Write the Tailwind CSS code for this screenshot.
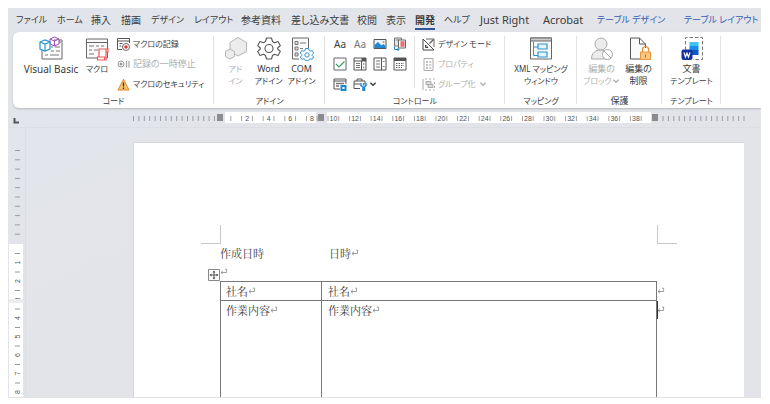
<!DOCTYPE html>
<html lang="ja">
<head>
<meta charset="utf-8">
<title>Word</title>
<script src="https://cdn.jsdelivr.net/npm/@tailwindcss/browser@4"></script>
</head>
<body class="h-screen bg-white pt-2 pr-[9px] pb-[6px] pl-2 font-['Noto_Sans','Noto_Sans_CJK_JP',sans-serif] text-[9px] text-[#3c3c3c] [font-feature-settings:'palt']">
<svg class="hidden">
  <symbol id="ret" viewBox="0 0 8 8"><path d="M5 1.2h1.6v3.3H1M3 2.6 1 4.5l2 1.8" fill="none" stroke="#888" stroke-width=".8"/></symbol>
  <symbol id="chev" viewBox="0 0 6 6"><path d="M1 2l2 2 2-2" fill="none" stroke="currentColor"/></symbol>
</svg>
<div class="flex h-full flex-col overflow-hidden border-b border-[#e2e2e4] bg-linear-to-br from-[#e1e5ea] via-[#e3e4ea] to-[#e2e4ea]">
  <nav class="grid h-6 shrink-0 grid-cols-[41px_34px_30px_30px_43px_47px_50px_66px_29px_29px_29px_36px_63px_54px_87px_1fr] items-center pl-2 text-[10px] whitespace-nowrap">
    <a href="#" class="text-[9px]">ファイル</a><a href="#" class="text-[9px]">ホーム</a><a href="#">挿入</a><a href="#">描画</a><a href="#" class="text-[9px]">デザイン</a><a href="#" class="text-[9px]">レイアウト</a><a href="#">参考資料</a><a href="#">差し込み文書</a><a href="#">校閲</a><a href="#">表示</a><a href="#" class="h-5 w-5 border-b-2 border-[#2b579a] leading-5 font-bold">開発</a><a href="#" class="text-[9px]">ヘルプ</a><a href="#" class="text-[11px]">Just Right</a><a href="#" class="text-[11px]">Acrobat</a><a href="#" class="text-[9px] text-[#2f5fb3]">テーブル デザイン</a><a href="#" class="text-[9px] text-[#2f5fb3]">テーブル レイアウト</a>
  </nav>

  <div class="ml-[5px] grid h-[76px] shrink-0 grid-cols-[201px_111px_180px_72px_85px_59px_1fr] rounded-l-md bg-white pt-0.5 whitespace-nowrap shadow-[0_1px_2px_#b5b7bd]">
    <section class="relative flex flex-col after:absolute after:top-0.5 after:right-0 after:h-[68px] after:w-px after:bg-[#e1e1e1]">
      <div class="flex h-[60px] pl-2">
        <button class="flex w-[60px] flex-col items-center gap-0.5 pt-0.5 leading-3">
          <svg class="h-[25px] w-[26px]" viewBox="0 0 26 25" fill="none"><path d="M4 14v9h20V4H16" stroke="#666"/><path d="M16 4h8v3h-8z" fill="#aaa"/><path d="M13 11h2m2 0h5M13 15h3m2 0h4M7 19h3m2 0h9" stroke="#777"/><path d="M12 3l4.500-2L21 3v5l-4.500 2L12 8zM12 3l4.500 2L21 3M16.500 5v5" stroke="#a24bb8" fill="#fff"/><path d="M2 6l5-2 5 2v7l-5 2-5-2zM2 6l5 2 5-2M7 8v7" stroke="#2e93d0" fill="#fff" stroke-width="1.200"/></svg>
          <span class="text-[10px]">Visual Basic</span>
        </button>
        <button class="flex w-8 flex-col items-center gap-0.5 pt-0.5 leading-3">
          <svg class="h-[25px] w-6" viewBox="0 0 24 25" fill="none"><path d="M1.500 3h21v19h-21z" stroke="#666" fill="#fafafa"/><path d="M1.500 6.500h21" stroke="#666"/><path d="M4 10h5m2 0h3m2 0h3M4 14h3m2 0h4M4 18h5" stroke="#777"/><path d="M14 13h9v3h-2v8h-8.500v-3H14zM21 16v-3M12.500 21h7v3" stroke="#ee5a5a" fill="#fff" stroke-width="1.200"/></svg>
          <span class="text-[8px]">マクロ</span>
        </button>
        <div class="pl-1">
          <button class="flex h-5 items-center gap-[3px] text-[8px]"><svg class="size-[13px]" viewBox="0 0 13 13" fill="none"><path d="M5 11.500H.5V.5h12V5M.5 3h12M2.500 5.500h3M2.500 8h2" stroke="#555"/><circle cx="9" cy="9" r="3.500" stroke="#666" fill="#fff"/><circle cx="9" cy="9" r="1.800" fill="#e03c31"/></svg>マクロの記録</button>
          <button class="flex h-5 items-center gap-[3px] text-[#b0b0b0]" disabled><svg class="size-[13px]" viewBox="0 0 13 13" fill="none"><circle cx="4" cy="6" r="3" stroke="#999"/><circle cx="4" cy="6" r="1.500" fill="#999"/><path d="M9.500 3v6.500M12 3v6.500" stroke="#aaa" stroke-width="1.300"/></svg>記録の一時停止</button>
          <button class="flex h-5 items-center gap-[3px] text-[8px]"><svg class="size-[13px]" viewBox="0 0 13 13"><path d="M6.500 1.200 12 12H1z" fill="#fbc36b" stroke="#e3862e" stroke-linejoin="round"/><path d="M6.500 4.500v4M6.500 9.500V11" stroke="#333" stroke-width="1.300"/></svg>マクロのセキュリティ</button>
        </div>
      </div>
      <h2 class="text-center text-[8px] leading-[14px]">コード</h2>
    </section>

    <section class="relative flex flex-col after:absolute after:top-0.5 after:right-0 after:h-[68px] after:w-px after:bg-[#e1e1e1]">
      <div class="flex h-[60px] pl-[5px]">
        <button class="flex w-[33px] flex-col items-center gap-0.5 pt-0.5 text-[8px] leading-3 text-[#b0b0b0]" disabled>
          <svg class="h-[25px] w-6" viewBox="0 0 24 25" fill="#ececec" stroke="#b5b5b5"><path d="M14 1.500l8.500 5v9L14 20l-8-4.500v-9z"/><path d="M6 13l4.500 2.500v5L6 23l-4.500-2.500v-5z"/></svg>
          <span>アド<br>イン</span>
        </button>
        <button class="flex w-[33px] flex-col items-center gap-0.5 pt-0.5 text-[8px] leading-3">
          <svg class="h-[25px] w-6" viewBox="0 0 24 25" fill="none" stroke="#555" stroke-width="1.100" stroke-linejoin="round"><path d="M9.500 2h5l1 3.500 2 1.200L21 5.600l2.300 4L20.700 12v1l2.600 2.400-2.300 4-3.500-1.100-2 1.200-1 3.500h-5l-1-3.500-2-1.200L3 19.400l-2.300-4L3.300 13v-1L.7 9.600l2.300-4 3.500 1.100 2-1.200z"/><circle cx="12" cy="12.500" r="4"/></svg>
          <span class="flex flex-col items-center"><span class="text-[9px]">Word</span>アドイン</span>
        </button>
        <button class="flex w-[33px] flex-col items-center gap-0.5 pt-0.5 text-[8px] leading-3">
          <svg class="h-[25px] w-6" viewBox="0 0 24 25" fill="none"><path d="M9 23H2.500V2h16v10" stroke="#666" fill="#fafafa"/><path d="M5 5.500h3v3H5zM5 11h3v3H5zM5 17h3v3H5z" stroke="#777" fill="#ddd"/><path d="M10 7h6M10 12.500h3" stroke="#777"/><g stroke="#2e93d0" fill="#fff" stroke-linejoin="round"><path d="M15.500 12.500h3l.5 2 1.200.7 2-.7 1.500 2.500-1.500 1.500v1l1.500 1.500-1.500 2.300-2-.5-1.200.7-.5 1.300h-3l-.5-1.300-1.200-.7-2 .5L10.300 21l1.500-1.500v-1L10.300 17l1.500-2.500 2 .7 1.200-.7z"/><circle cx="17" cy="19" r="2.200"/></g></svg>
          <span class="flex flex-col items-center"><span class="text-[9px]">COM</span>アドイン</span>
        </button>
      </div>
      <h2 class="text-center text-[8px] leading-[14px]">アドイン</h2>
    </section>

    <section class="relative flex flex-col after:absolute after:top-0.5 after:right-0 after:h-[68px] after:w-px after:bg-[#e1e1e1]">
      <div class="flex h-[60px] pl-[5px]">
        <div class="grid w-20 grid-cols-4 grid-rows-3 place-items-center text-[10px]">
          <button>Aa</button>
          <button class="text-[#777]">Aa</button>
          <button aria-label="画像"><svg class="size-[14px]" viewBox="0 0 14 14"><path d="M1 2.500h12v9H1z" fill="#eaf4fb" stroke="#555"/><path d="M1.500 8 5 5l3.500 3.500L10.500 7 12.500 9v2h-11z" fill="#1f86cf"/><circle cx="10.500" cy="5" r="1" fill="#e89a3c"/></svg></button>
          <button aria-label="文書パーツ"><svg class="size-[14px]" viewBox="0 0 14 14" fill="none"><path d="M1.500 1h7v8h-7zM3 3h3" stroke="#777" fill="#e4e4e4"/><path d="M5.500 3h7v8h-7z" fill="#fff" stroke="#666"/><path d="M7.500 4.500h4v5h-4z" fill="#f19a9a"/><path d="M7.500 5h4M7.500 7h4M7.500 9h4" stroke="#e24848"/><path d="M1.500 9.500v3H6M4.500 11 6 12.500 4.500 14" stroke="#1f86cf"/></svg></button>
          <button aria-label="チェック ボックス"><svg class="size-[14px]" viewBox="0 0 14 14" fill="none"><path d="M1 1h12v12H1z" stroke="#666"/><path d="M3 7l3 3 5.500-5.500" stroke="#37a660" stroke-width="1.200"/></svg></button>
          <button aria-label="コンボ ボックス"><svg class="size-[14px]" viewBox="0 0 14 14" fill="none"><path d="M1 1h12v12H1zM1 4h12M8.500 4v9" stroke="#555"/><path d="M8.500 1h4.500v3H8.500z" fill="#555"/><path d="M3 6.500h4M3 8.500h4M3 10.500h4M10.700 6v2M10.700 9.500v2" stroke="#777"/></svg></button>
          <button aria-label="ドロップダウン"><svg class="size-[14px]" viewBox="0 0 14 14" fill="none"><path d="M1 1h12v12H1zM8.500 1v12" stroke="#555"/><path d="M3 4h4M3 7h4M3 10h4M10 5l.8-1 .7 1M10 9l.8 1 .7-1" stroke="#777"/></svg></button>
          <button aria-label="日付の選択"><svg class="size-[14px]" viewBox="0 0 14 14" fill="none"><path d="M1 1h12v12H1z" stroke="#555"/><path d="M1 2.500h12" stroke="#555" stroke-width="3"/><path d="M3 6.500h8M3 8.500h8M3 10.500h6" stroke="#666" stroke-dasharray="1.500 1"/></svg></button>
          <button aria-label="繰り返しセクション"><svg class="size-[14px]" viewBox="0 0 14 14" fill="none"><path d="M7 12H1V2h12v5M1 4h12" stroke="#555"/><path d="M3 6.500h8M3 9h3" stroke="#777" stroke-width="1.500"/><path d="M7.500 8H13.500V14H7.500z" fill="#1f86cf"/><path d="M9.500 10h2v2h-2z" fill="#fff"/></svg></button>
          <button aria-label="以前のツール" class="flex items-center pl-2.5"><svg class="size-[14px]" viewBox="0 0 14 14" fill="none"><path d="M7 11.500H1V4h11v3M4 4V2h5v2M1 7h6" stroke="#555"/><path d="M8 6v2.500L10 10v4h1.500v-4L13 8.500V6M10.700 6v2.500" stroke="#1f86cf" stroke-width="1.500"/></svg><svg class="ml-0.5 size-2"><use href="#chev"/></svg></button>
        </div>
        <div class="mt-0.5 ml-1 h-[52px] w-2 border-l border-[#e1e1e1]"></div>
        <div>
          <button class="flex h-5 items-center gap-[3px] text-[8px]"><svg class="size-[13px]" viewBox="0 0 13 13" fill="none"><path d="M1 1v11h11zM3.500 7v2.500H6z" stroke="#444"/><path d="M4 1h8v8" stroke="#666"/><path d="M11.500 1.500l-4 4" stroke="#666" stroke-width="1.500"/></svg>デザイン モード</button>
          <button class="flex h-5 items-center gap-[3px] text-[8px] text-[#b0b0b0]" disabled><svg class="size-[13px]" viewBox="0 0 13 13" fill="none" stroke="#aaa"><path d="M2 .5h9v12H2z"/><path d="M4 4h2M4 7h2M4 10h2" stroke-width="1.500"/><path d="M7 4h2.500M7 7h2.500M7 10h2.500"/></svg>プロパティ</button>
          <button class="flex h-5 items-center gap-[3px] text-[8px] text-[#b0b0b0]" disabled><svg class="size-[13px]" viewBox="0 0 13 13" fill="none" stroke="#aaa"><path d="M1 1v11M3 1h2M7 1h2M11 1h1.500M12.500 4v2M12.500 8v2M3 12h2M7 12h2M11 12h1.500"/><path d="M4 3.500h5v3H4zM6 6.500h5v3H6z" fill="#ddd"/></svg>グループ化<svg class="size-2"><use href="#chev"/></svg></button>
        </div>
      </div>
      <h2 class="text-center text-[8px] leading-[14px]">コントロール</h2>
    </section>

    <section class="relative flex flex-col after:absolute after:top-0.5 after:right-0 after:h-[68px] after:w-px after:bg-[#e1e1e1]">
      <button class="flex h-[60px] flex-col items-center gap-0.5 pt-0.5 text-[8px] leading-3">
        <svg class="h-[25px] w-6" viewBox="0 0 24 25" fill="none"><path d="M1.500 2h21v21h-21z" fill="#fafafa" stroke="#666"/><path d="M1.500 2h21v3h-21z" fill="#ccc" stroke="#666"/><path d="M4.500 6v13.500H9M4.500 11H9" stroke="#2e93d0"/><path d="M9 8h9v5H9zM9 16h9v5H9z" stroke="#2e93d0" fill="#e8f4fb" stroke-width="1.200"/></svg>
        <span>XML マッピング<br>ウィンドウ</span>
      </button>
      <h2 class="text-center text-[8px] leading-[14px]">マッピング</h2>
    </section>

    <section class="relative flex flex-col after:absolute after:top-0.5 after:right-0 after:h-[68px] after:w-px after:bg-[#e1e1e1]">
      <div class="flex h-[60px] pl-1.5">
        <button class="flex w-[37px] flex-col items-center gap-0.5 pt-0.5 leading-3 text-[#b0b0b0]" disabled>
          <svg class="h-[25px] w-6" viewBox="0 0 24 25" fill="#ececec" stroke="#aaa"><path d="M1.500 23c0-6 4-9 9-9s9 3 9 9z"/><circle cx="11" cy="8" r="6"/><circle cx="17.500" cy="18.500" r="5" fill="#fff"/><path d="M14 15l7 7"/></svg>
          <span class="flex flex-col items-center">編集の<span class="flex items-center text-[8px]">ブロック<svg class="size-2"><use href="#chev"/></svg></span></span>
        </button>
        <button class="flex w-[37px] flex-col items-center gap-0.5 pt-0.5 leading-3">
          <svg class="h-[25px] w-6" viewBox="0 0 24 25" fill="none"><path d="M13 23H3.500V2h9l6 6v4M12.500 2v6h6" stroke="#555" fill="#fafafa"/><path d="M15.500 16v-2.500a3 3 0 0 1 6 0V16" stroke="#e38c2e" stroke-width="1.200"/><path d="M13.500 16h10v7.500h-10z" fill="#fbc680" stroke="#e8973c"/><path d="M18.500 18.500v3" stroke="#b06a1c"/></svg>
          <span>編集の<br>制限</span>
        </button>
      </div>
      <h2 class="text-center leading-[14px]">保護</h2>
    </section>

    <section class="relative flex flex-col after:absolute after:top-0.5 after:right-0 after:h-[68px] after:w-px after:bg-[#e1e1e1]">
      <button class="flex h-[60px] flex-col items-center gap-0.5 pt-0.5 leading-3">
        <svg class="h-[25px] w-6" viewBox="0 0 24 25" fill="none"><path d="M5.500 14V1.500h17v22H13" stroke="#777" stroke-dasharray="3.500 2"/><path d="M9.500 6h9v4h-9z" fill="#3fc1f5"/><path d="M9.500 10h9v4.500h-9z" fill="#1b8be8"/><path d="M9.500 14h9v5h-9z" fill="#1657c8"/><rect x="1.500" y="13.500" width="11" height="10.500" rx="2" fill="#12349c"/><path d="M4 16.500l1.500 4.500L7 17.200 8.500 21 10 16.500" stroke="#fff" stroke-width="1.200"/></svg>
        <span class="flex flex-col items-center">文書<span class="text-[8px]">テンプレート</span></span>
      </button>
      <h2 class="text-center text-[8px] leading-[14px]">テンプレート</h2>
    </section>
  </div>

  <div class="h-5 shrink-0 border-b border-[#dcdee3]">
    <svg id="hruler" class="h-5 w-[753px] font-['Liberation_Sans',sans-serif]" viewBox="0 0 753 20"></svg>
  </div>

  <main class="flex min-h-0 flex-1">
    <div class="w-[18px] shrink-0 border-r border-[#dcdee3]"><svg id="vruler" class="h-[269px] w-[17px] font-['Liberation_Sans',sans-serif]" viewBox="0 0 17 269"></svg></div>
    <article class="mt-[14px] mr-[17px] ml-[107px] flex min-w-0 flex-1 flex-col border-t border-l border-[#d5d7db] bg-white pr-[67px] pl-[67px] font-['Noto_Serif_CJK_JP','Noto_Sans_CJK_JP',serif] text-[11px] [font-feature-settings:normal]">
      <div class="mt-[82px] flex h-[19px] shrink-0 justify-between">
        <span class="w-5 border-r border-b border-[#c9c9c9]"></span>
        <span class="w-5 border-b border-l border-[#c9c9c9]"></span>
      </div>
      <div class="flex min-h-0 flex-1 flex-col pr-5 pl-[19px]">
        <p class="flex h-[18px] shrink-0 items-center"><span class="w-[109px]">作成日時</span><span>日時</span><svg class="size-2"><use href="#ret"/></svg></p>
        <div class="relative h-[19px] shrink-0 pt-1.5">
          <svg class="size-2"><use href="#ret"/></svg>
          <svg class="absolute top-[7px] -left-3 size-3" viewBox="0 0 12 12" fill="none" stroke="#555"><path d="M.5.5h11v11H.5z" stroke="#888" fill="#fff"/><path d="M6 2v8M2 6h8" /><path d="M6 1.500l1.500 2h-3zM6 10.500l1.500-2h-3zM1.500 6l2-1.500v3zM10.500 6l-2-1.500v3z" fill="#555" stroke="none"/></svg>
        </div>
        <div class="relative min-h-0 flex-1">
          <table class="h-full w-full table-fixed border-collapse border border-b-0 border-[#777]">
            <colgroup><col class="w-[101px]"><col></colgroup>
            <tbody>
              <tr class="h-[19px] border-b border-[#777]">
                <td class="border-r border-[#777] p-0 pl-[5px]"><span class="flex items-center leading-4">社名<svg class="size-2"><use href="#ret"/></svg></span></td>
                <td class="p-0 pl-[6px]"><span class="flex items-center leading-4">社名<svg class="size-2"><use href="#ret"/></svg></span></td>
              </tr>
              <tr class="align-top">
                <td class="border-r border-[#777] p-0 pt-px pl-[5px]"><span class="flex items-center leading-4">作業内容<svg class="size-2"><use href="#ret"/></svg></span></td>
                <td class="p-0 pt-px pl-[6px]"><span class="flex items-center leading-4">作業内容<svg class="size-2"><use href="#ret"/></svg></span></td>
              </tr>
            </tbody>
          </table>
          <svg class="absolute top-1.5 left-full size-2"><use href="#ret"/></svg>
          <svg class="absolute top-[25px] left-full size-2"><use href="#ret"/></svg>
          <span class="absolute top-5 left-full h-[18px] w-px bg-[#333]"></span>
        </div>
      </div>
    </article>
  </main>
</div>
<script>
  const rect = (x, y, w, h, c) => `<rect x="${x}" y="${y}" width="${w}" height="${h}" fill="${c}"/>`;
  const grey = '#9b9da2';
  // Horizontal ruler: one number every 21.6 units, ticks midway
  let h = rect(217, 4, 91, 11, '#fff') + rect(319, 4, 324, 11, '#fff');
  h += '<path d="M6.500 10v4.500h4.500" fill="none" stroke="#555" stroke-width="2"/>';
  for (let i = 0; i < 16; i++) h += rect(125 + i * 5.4, 8, 1, 5, grey);
  for (let i = 0; i < 16; i++) h += rect(654.5 + i * 5.4, 8, 1, 5, grey);
  for (let i = 0; i < 39; i++) h += rect(222.3 + i * 10.8, 8, 1, 5, '#a4a4a4');
  for (const x of [209, 310, 644]) h += rect(x, 6, 6, 7, '#8a8c90');
  for (let n = 2; n <= 38; n += 2)
    h += `<text x="${217.5 + n * 10.8}" y="13" font-size="7" text-anchor="middle" fill="#555">${n}</text>`;
  document.getElementById('hruler').innerHTML = h;
  // Vertical ruler: one number every 18.6 units, rotated to read upwards
  let v = rect(1, 116, 14, 154, '#fff');
  for (let i = 0; i < 10; i++) v += rect(7, 22 + i * 9.3, 5, 1, grey);
  for (let i = 0; i < 8; i++) {
    v += rect(7, 125 + i * 18.5, 5, 1, '#999');
    const y = 134.5 + i * 18.5;
    v += `<text x="9" y="${y}" font-size="7" text-anchor="middle" fill="#555" transform="rotate(-90 9 ${y})" dy="2.5">${i + 1}</text>`;
  }
  v += rect(1, 171, 14, 4, '#ececee');
  document.getElementById('vruler').innerHTML = v;
</script>
</body>
</html>
